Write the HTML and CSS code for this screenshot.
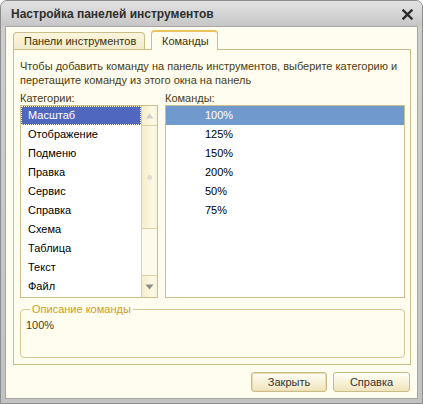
FILE: index.html
```html
<!DOCTYPE html>
<html lang="ru">
<head>
<meta charset="utf-8">
<title>Настройка панелей инструментов</title>
<link rel="stylesheet" href="styles.css">
</head>
<body>
<div class="window">
  <div class="titlebar">
    <span class="title">Настройка панелей инструментов</span>
    <svg class="close" width="11" height="11" viewBox="0 0 11 11"><path d="M1.5 1.5 L9.5 9.5 M9.5 1.5 L1.5 9.5" stroke="#2b2b2b" stroke-width="2.4" stroke-linecap="square"/></svg>
  </div>
  <div class="client">
    <div class="tabs">
      <div class="tab tab-panels">Панели инструментов</div>
      <div class="tab tab-cmds active">Команды</div>
    </div>
    <div class="panel">
      <p class="intro">Чтобы добавить команду на панель инструментов, выберите категорию и<br>перетащите команду из этого окна на панель</p>
      <div class="lists">
        <div class="col col-cat">
          <div class="label">Категории:</div>
          <div class="listbox cat">
            <ul class="items">
              <li class="sel">Масштаб</li>
              <li>Отображение</li>
              <li>Подменю</li>
              <li>Правка</li>
              <li>Сервис</li>
              <li>Справка</li>
              <li>Схема</li>
              <li>Таблица</li>
              <li>Текст</li>
              <li>Файл</li>
            </ul>
            <div class="scrollbar">
              <div class="sb-btn up"><svg width="9" height="6" viewBox="0 0 9 6"><path d="M4.5 0.5 L8.5 5.5 L0.5 5.5 Z" fill="#cfcfcf"/></svg></div>
              <div class="sb-thumb"><span class="grip"></span></div>
              <div class="sb-track"></div>
              <div class="sb-btn down"><svg width="9" height="6" viewBox="0 0 9 6"><path d="M0.5 0.5 L8.5 0.5 L4.5 5.5 Z" fill="#8c8c8c"/></svg></div>
            </div>
          </div>
        </div>
        <div class="col col-cmd">
          <div class="label">Команды:</div>
          <div class="listbox cmd">
            <ul class="items">
              <li class="sel">100%</li>
              <li>125%</li>
              <li>150%</li>
              <li>200%</li>
              <li>50%</li>
              <li>75%</li>
            </ul>
          </div>
        </div>
      </div>
      <fieldset class="group">
        <legend>Описание команды</legend>
        <div class="desc">100%</div>
      </fieldset>
    </div>
    <div class="buttons">
      <button class="btn default">Закрыть</button>
      <button class="btn">Справка</button>
    </div>
  </div>
</div>
</body>
</html>
```

FILE: styles.css
```css
* { box-sizing: border-box; }

html, body {
  margin: 0;
  padding: 0;
  background: #ffffff;
}

body {
  font-family: "Liberation Sans", Arial, sans-serif;
  font-size: 11px;
  line-height: 14px;
  color: #4a3c10;
}

.window {
  width: 423px;
  height: 404px;
  border: 1px solid #8d8d8d;
  border-radius: 7px 7px 0 0;
  background: linear-gradient(to bottom, #cfcfcf, #c2c2c2);
  display: flex;
  flex-direction: column;
  overflow: hidden;
}

.titlebar {
  height: 25px;
  flex: none;
  display: flex;
  align-items: center;
  justify-content: space-between;
  padding: 1px 9px 0 10px;
  background: linear-gradient(to bottom, #e2e2e2, #d2d2d2 60%, #c6c6c6);
}

.title {
  font-weight: bold;
  font-size: 12px;
  color: #2e2e2e;
}

.close {
  display: block;
}

.client {
  flex: 1;
  margin: 0 4px 4px;
  border: 1px solid #a6a6a6;
  background: #fffdf0;
  padding: 3px 6px 6px 7px;
  display: flex;
  flex-direction: column;
}

.tabs {
  display: flex;
  align-items: flex-end;
  gap: 6px;
  height: 20px;
  margin-bottom: -1px;
}

.tab {
  height: 17px;
  margin-bottom: 1px;
  padding: 0 0 0 10px;
  border: 1px solid #cbbd86;
  border-bottom: none;
  border-radius: 4px 4px 0 0;
  background: linear-gradient(to bottom, #fbf5dc, #f3ebcc);
  color: #3d3205;
  line-height: 16px;
  white-space: nowrap;
}

.tab-panels { width: 132px; }
.tab-cmds { width: 67px; }

.tab.active {
  height: 20px;
  margin-bottom: 0;
  position: relative;
  z-index: 1;
  border-top: 2px solid #ecc35e;
  background: #fffdf0;
  line-height: 18px;
}

.panel {
  height: 316px;
  border: 1px solid #cbbd86;
  padding: 9px 5px 6px 6px;
  display: flex;
  flex-direction: column;
}

.intro {
  margin: 0;
  line-height: 14px;
  white-space: nowrap;
}

.lists {
  margin-top: 4px;
  display: flex;
  gap: 7px;
}

.col {
  display: flex;
  flex-direction: column;
}

.col-cat { width: 138px; }
.col-cmd { width: 240px; }

.label {
  height: 14px;
  line-height: 14px;
}

.listbox {
  height: 193px;
  border: 1px solid #cdbf8a;
  background: #ffffff;
  display: flex;
}

.items {
  list-style: none;
  margin: 0;
  padding: 0;
  flex: 1;
  color: #000000;
}

.items li {
  height: 19px;
  line-height: 19px;
  white-space: nowrap;
}

.cat .items li { padding-left: 7px; }
.cmd .items li { padding-left: 39px; }

.cat .items li.sel {
  background: #4f67bf;
  color: #ffffff;
  outline: 1px dotted #f4f4d0;
  outline-offset: -1px;
}

.cmd .items li.sel {
  background: #709acd;
  color: #ffffff;
}

.scrollbar {
  width: 16px;
  border-left: 1px solid #ddd1a0;
  display: flex;
  flex-direction: column;
}

.sb-btn,
.sb-thumb {
  background: linear-gradient(to right, #f5ecc9, #fdf9e6 70%, #f9f2d6);
  display: flex;
  align-items: center;
  justify-content: center;
}

.sb-btn.up {
  height: 20px;
  border-bottom: 1px solid #ddd1a0;
}

.sb-thumb {
  height: 103px;
  border-bottom: 1px solid #ddd1a0;
}

.grip {
  width: 5px;
  height: 5px;
  border-radius: 50%;
  background: #e2ddcc;
}

.sb-track {
  height: 47px;
  border-bottom: 1px solid #ddd1a0;
  background: #fdfaeb;
}

.sb-btn.down {
  flex: 1;
}

.group {
  margin: 4px 0 0;
  padding: 2px 5px 25px;
  border: 1px solid #d4c794;
  border-radius: 4px;
  min-width: 0;
}

.group legend {
  margin-left: 4px;
  padding: 0 2px;
  line-height: 14px;
  color: #cf9c16;
}

.desc {
  line-height: 14px;
}

.buttons {
  margin-top: 7px;
  display: flex;
  justify-content: flex-end;
  gap: 6px;
  padding-right: 1px;
}

.btn {
  height: 20px;
  width: 76px;
  font-family: "Liberation Sans", Arial, sans-serif;
  font-size: 11px;
  color: #333333;
  border: 1px solid #cbbb84;
  border-radius: 3px;
  background: linear-gradient(to bottom, #fffef8, #f8f1d8 50%, #efe4bd);
  padding: 0;
}

.btn + .btn { width: 77px; }

.btn.default {
  box-shadow: inset 0 0 0 1px #e9dcae;
}
```
